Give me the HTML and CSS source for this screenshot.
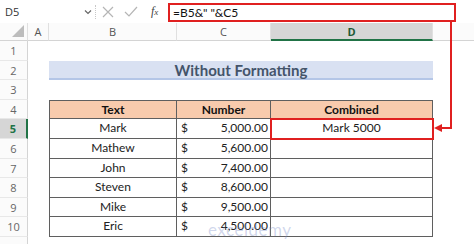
FILE: index.html
```html
<!DOCTYPE html>
<html>
<head>
<meta charset="utf-8">
<link rel="stylesheet" href="styles.css">
</head>
<body>
<div class="page">
  <div class="fbar">
    <div class="namebox">D5</div>
    <svg class="chev" width="8" height="6" viewBox="0 0 8 6"><path d="M1 1.5 L4 4.5 L7 1.5" fill="none" stroke="#666" stroke-width="1.2"/></svg>
    <div class="sep"></div>
    <svg class="ico x" width="12" height="12" viewBox="0 0 12 12"><path d="M1 1 L11 11 M11 1 L1 11" stroke="#b5b5b5" stroke-width="1.2"/></svg>
    <svg class="ico" width="14" height="12" viewBox="0 0 14 12"><path d="M1 6 L5 10 L13 1" fill="none" stroke="#b5b5b5" stroke-width="1.2"/></svg>
    <div class="fx"><i>f</i><span>x</span></div>
    <div class="formula">=B5&amp;" "&amp;C5</div>
  </div>
  <div class="sheet">
    <div class="corner"><svg width="12" height="12" viewBox="0 0 12 12"><path d="M12 0 L12 12 L0 12 Z" fill="#bdbdbd"/></svg></div>
    <div class="ch">A</div><div class="ch">B</div><div class="ch">C</div><div class="ch sel">D</div><div class="ch last"></div>

    <div class="rh">1</div><div class="c"></div><div class="c"></div><div class="c"></div><div class="c"></div><div class="c"></div>
    <div class="rh">2</div><div class="c"></div><div class="title">Without Formatting</div><div class="c"></div>
    <div class="rh">3</div><div class="c"></div><div class="c"></div><div class="c"></div><div class="c"></div><div class="c"></div>
    <div class="rh">4</div><div class="c"></div><div class="t th first">Text</div><div class="t th">Number</div><div class="t th">Combined</div><div class="c"></div>
    <div class="rh rsel">5</div><div class="c"></div><div class="t first">Mark</div><div class="t num"><span>$</span><span>5,000.00</span></div><div class="t hl">Mark 5000</div><div class="c"></div>
    <div class="rh">6</div><div class="c"></div><div class="t first">Mathew</div><div class="t num"><span>$</span><span>5,600.00</span></div><div class="t"></div><div class="c"></div>
    <div class="rh">7</div><div class="c"></div><div class="t first">John</div><div class="t num"><span>$</span><span>7,400.00</span></div><div class="t"></div><div class="c"></div>
    <div class="rh">8</div><div class="c"></div><div class="t first">Steven</div><div class="t num"><span>$</span><span>8,600.00</span></div><div class="t"></div><div class="c"></div>
    <div class="rh">9</div><div class="c"></div><div class="t first">Mike</div><div class="t num"><span>$</span><span>9,500.00</span></div><div class="t"></div><div class="c"></div>
    <div class="rh">10</div><div class="c"></div><div class="t first">Eric</div><div class="t num"><span>$</span><span>4,500.00</span></div><div class="t"></div><div class="c"></div>
    <div class="rh"></div><div class="c"></div><div class="c"></div><div class="c"></div><div class="c"></div><div class="c"></div>
  </div>
  <div class="wm">exceldemy</div>
  <svg class="arrow" width="474" height="244" viewBox="0 0 474 244">
    <path d="M451 21 L451 128 L441 128" fill="none" stroke="#e02020" stroke-width="2"/>
    <path d="M434 128 L442 124 L442 132 Z" fill="#e02020"/>
  </svg>
</div>
</body>
</html>
```
FILE: styles.css
```css
* { box-sizing: border-box; }
body { margin: 0; background: #fff; }
.page { position: relative; width: 474px; height: 244px; overflow: hidden; font-family: "Open Sans", sans-serif; }
.fbar { height: 23px; display: flex; align-items: center; background: #fff; }
.namebox { width: 83px; padding-left: 5px; font-size: 11px; color: #333; }
.chev { margin-left: 1px; }
.sep { width: 1px; height: 14px; margin: 0 6px 0 3px; border-left: 1px dotted #c8c8c8; }
.ico { margin-right: 8px; }
.ico.x { margin-right: 10px; }
.fx { width: 22px; padding-left: 5px; font-family: "Liberation Serif", serif; font-size: 12px; color: #444; }
.fx span { font-size: 9px; font-style: italic; }
.formula { flex: 0 0 288px; height: 19px; margin-top: 1px; border: 2px solid #e02020; padding-left: 3px; font-family: "Lato", sans-serif; font-size: 12px; line-height: 15px; color: #111; }
.sheet { display: grid; grid-template-columns: 28px 21px 128px 94px 162px 41px; grid-template-rows: 18px repeat(10, 19.6px) 8px; }
.corner { display: flex; align-items: flex-end; justify-content: flex-end; padding: 0 3px 3px 0; border-right: 1px solid #e0e0e0; border-bottom: 1px solid #d4d4d4; background: #fbfbfb; }
.ch { background: #fbfbfb; border-right: 1px solid #e0e0e0; border-bottom: 1px solid #d4d4d4; font-size: 11px; color: #555; text-align: center; line-height: 17px; }
.ch.sel { background: #d6d6d6; border-bottom: 2px solid #217346; color: #1e5a36; font-weight: 700; }
.ch.last { border-right: none; }
.rh { border-right: 1px solid #d4d4d4; border-bottom: 1px solid #e8e8e8; background: #fbfbfb; font-size: 11px; color: #666; text-align: center; line-height: 19px; }
.rh.rsel { background: #d6d6d6; color: #217346; font-weight: 700; border-right: 2px solid #217346; }
.c { background: #fff; }
.title { grid-column: 3 / 6; background: #d9e1f2; border-bottom: 2px solid #b4c6e7; font-family: "Lato", sans-serif; font-weight: 700; font-size: 15px; color: #44546a; text-align: center; line-height: 18px; }
.t { border-right: 1px solid #5f5f5f; border-bottom: 1px solid #5f5f5f; font-family: "Lato", sans-serif; font-size: 12px; color: #222; text-align: center; line-height: 18px; background: #fff; }
.t.first { border-left: 1px solid #5f5f5f; }
.th { background: #f8cbad; border-top: 1px solid #5f5f5f; font-weight: 700; color: #111; }
.num { display: flex; justify-content: space-between; padding: 0 2px 0 4px; }
.hl { outline: 2px solid #e02020; outline-offset: -1px; position: relative; z-index: 1; }
.wm { position: absolute; left: 208px; top: 219px; font-family: "Lato", sans-serif; font-size: 17px; color: rgba(120,140,200,0.35); letter-spacing: 0.5px; }
.arrow { position: absolute; left: 0; top: 0; pointer-events: none; }
```
